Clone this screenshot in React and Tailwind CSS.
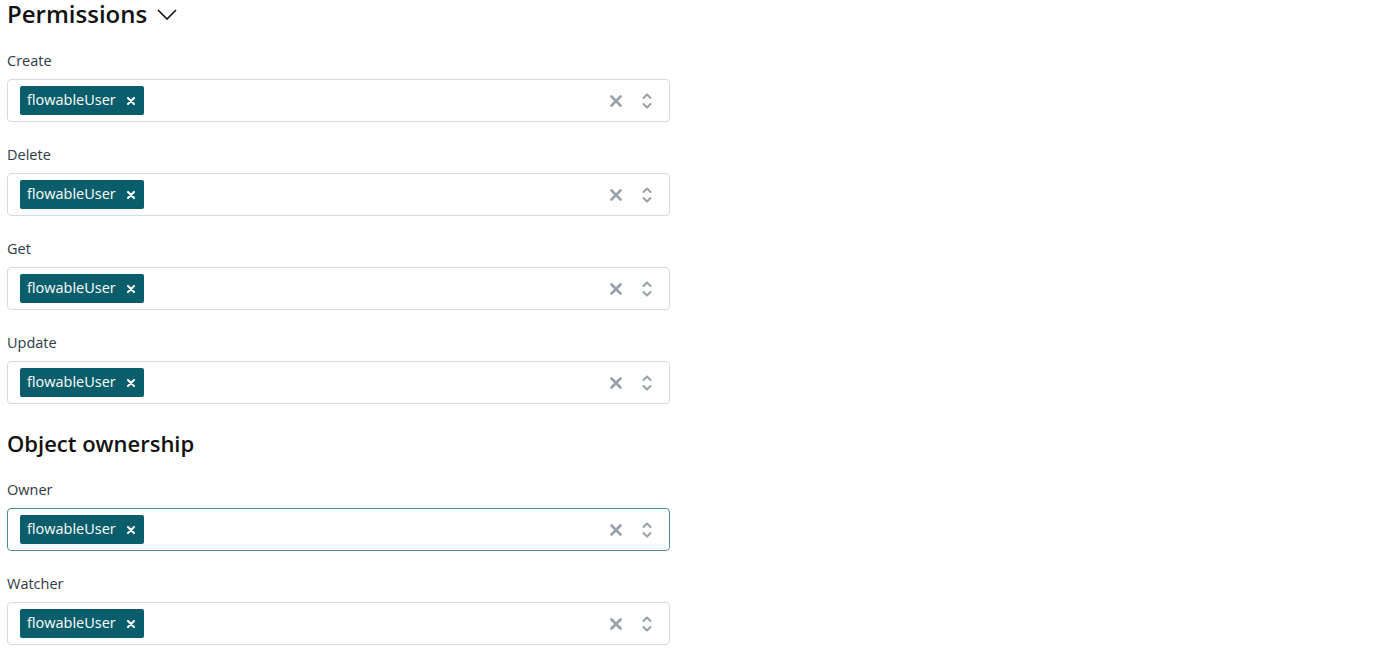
import React from 'react';

const font = { fontFamily: '"Open Sans", "Liberation Sans", sans-serif' };

function ClearIcon() {
    return (
        <svg width="12" height="12" viewBox="0 0 12 12" className="text-[#98a0aa]">
            <path d="M1.5 1.5 L10.5 10.5 M10.5 1.5 L1.5 10.5" stroke="currentColor" strokeWidth="2.6" strokeLinecap="round" />
        </svg>
    );
}

function UpDownIcon() {
    return (
        <svg width="12" height="18" viewBox="0 0 12 18" className="text-[#98a0aa]">
            <path d="M2.5 6 L6 2.5 L9.5 6 M2.5 12 L6 15.5 L9.5 12" fill="none" stroke="currentColor" strokeWidth="2" strokeLinecap="round" strokeLinejoin="round" />
        </svg>
    );
}

function TagSelect({ label, focused }) {
    return (
        <div className="flex flex-col">
            <div className="h-5 text-[14.5px] leading-5 text-[#2f3a45]">{label}</div>
            <div
                className={
                    'mt-2 h-[43px] w-[663px] rounded-[4px] flex items-center pl-[12px] pr-[16px] bg-white ' +
                    (focused ? 'border-[1.5px] border-[#4b8d98]' : 'border border-[#d5dadf]')
                }
            >
                <div className="flex items-center h-[29px] rounded-[2px] bg-[#0a5e6b] text-white pl-[7px] pr-[9px]">
                    <span className="text-[14.5px] leading-none">flowableUser</span>
                    <span className="ml-[11px] flex items-center">
                        <svg width="8" height="8" viewBox="0 0 8 8">
                            <path d="M1 1 L7 7 M7 1 L1 7" stroke="white" strokeWidth="2" strokeLinecap="round" />
                        </svg>
                    </span>
                </div>
                <div className="flex-1" />
                <ClearIcon />
                <div className="ml-[19px] flex items-center">
                    <UpDownIcon />
                </div>
            </div>
        </div>
    );
}

export default function App() {
    return (
        <div className="min-h-screen bg-white px-[7px]" style={font}>
            {/* Permissions */}
            <div className="flex items-center h-7 gap-[10px]">
                <h2 className="text-[24px] leading-7 font-semibold text-[#111]">Permissions</h2>
                <svg width="20" height="11" viewBox="0 0 20 11">
                    <path d="M1 1 L10 10 L19 1" fill="none" stroke="#111" strokeWidth="1.6" />
                </svg>
            </div>

            <div className="mt-[23px] flex flex-col gap-[23px]">
                <TagSelect label="Create" />
                <TagSelect label="Delete" />
                <TagSelect label="Get" />
                <TagSelect label="Update" />
            </div>

            {/* Object ownership */}
            <h2 className="mt-[25px] h-7 text-[22px] leading-7 font-semibold text-[#111]">Object ownership</h2>

            <div className="mt-[23px] flex flex-col gap-[23px]">
                <TagSelect label="Owner" focused />
                <TagSelect label="Watcher" />
            </div>
        </div>
    );
}
